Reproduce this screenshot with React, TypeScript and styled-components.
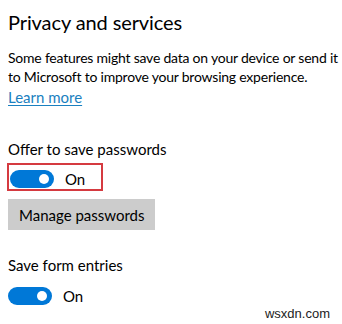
import React from "react"
import styled, { createGlobalStyle } from "styled-components"

const GlobalStyle = createGlobalStyle`
  html, body {
    margin: 0;
    padding: 0;
    background: #ffffff;
  }

  body {
    font-family: Lato, "Noto Sans", sans-serif;
    color: #000000;
  }
`

const Page = styled.div`
  position: relative;
  width: 342px;
  height: 324px;
  box-sizing: border-box;
  padding: 10px 4px 0 8px;
  overflow: hidden;
`

const Title = styled.h2`
  margin: 0;
  font-size: 20px;
  font-weight: 400;
  line-height: 24px;
  letter-spacing: -0.1px;
`

const Description = styled.p`
  margin: 14px 0 0;
  font-size: 14px;
  line-height: 19px;
  letter-spacing: -0.22px;
`

const LearnMore = styled.a`
  display: inline-block;
  margin-top: 2px;
  font-size: 15px;
  line-height: 19px;
  color: #1a80c0;
  text-decoration: underline;
  text-underline-offset: 2px;
`

const Label = styled.div<{ $gap: number }>`
  margin-top: ${(p) => p.$gap}px;
  font-size: 15px;
  line-height: 19px;
`

const Highlight = styled.div`
  display: inline-flex;
  margin: 4px 0 0 -1px;
  padding: 5px 16px 1px 1px;
  border: 2px solid #d53a40;
`

const ToggleRow = styled.div<{ $gap?: number }>`
  display: flex;
  align-items: center;
  gap: 11px;
  margin-top: ${(p) => p.$gap ?? 0}px;
`

const Track = styled.span`
  display: flex;
  align-items: center;
  justify-content: flex-end;
  box-sizing: border-box;
  width: 44px;
  height: 18px;
  padding: 0 5px;
  border-radius: 9px;
  background: #0078d7;
`

const Knob = styled.span`
  width: 10px;
  height: 10px;
  border-radius: 50%;
  background: #ffffff;
`

const State = styled.span`
  font-size: 15px;
  line-height: 18px;
`

const Button = styled.button`
  display: block;
  width: 147px;
  height: 31px;
  margin-top: 8px;
  padding: 0 11px;
  border: none;
  background: #cccccc;
  font-family: inherit;
  font-size: 15px;
  color: #000000;
  text-align: left;
  white-space: nowrap;
`

const Watermark = styled.span`
  position: absolute;
  right: 12px;
  bottom: 3px;
  font-family: "Liberation Sans", Arial, sans-serif;
  font-size: 13px;
  color: #222222;
`

function Toggle({ gap }: { gap?: number }) {
  return (
    <ToggleRow $gap={gap}>
      <Track>
        <Knob />
      </Track>
      <State>On</State>
    </ToggleRow>
  )
}

export default function App() {
  return (
    <>
      <GlobalStyle />
      <Page>
        <Title>Privacy and services</Title>
        <Description>
          Some features might save data on your device or send it to Microsoft to improve your browsing experience.
        </Description>
        <LearnMore href="#">Learn more</LearnMore>

        <Label $gap={33}>Offer to save passwords</Label>
        <Highlight>
          <Toggle />
        </Highlight>
        <Button>Manage passwords</Button>

        <Label $gap={26}>Save form entries</Label>
        <Toggle gap={12} />

        <Watermark>wsxdn.com</Watermark>
      </Page>
    </>
  )
}
